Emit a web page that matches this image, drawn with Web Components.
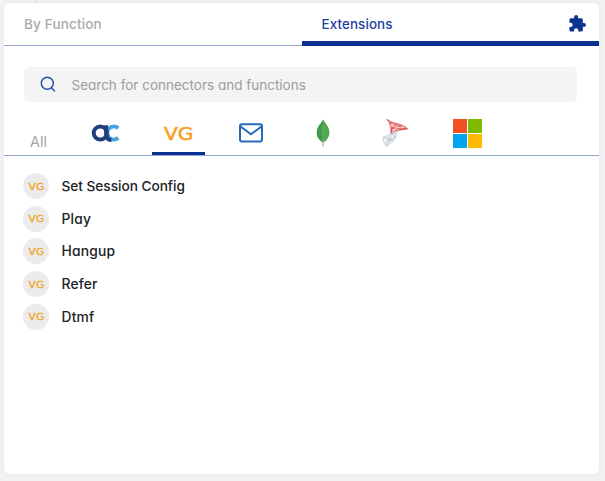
<!DOCTYPE html>
<html lang="en"><head><meta charset="utf-8"><title>Extensions</title>
<style>
html,body{margin:0;height:100%}
body{background:linear-gradient(#dedede,#dedede) 35px 0/1px 3px no-repeat #f2f2f2;overflow:hidden;font-family:Inter,"Open Sans",sans-serif;font-feature-settings:"cv11";font-size:14px;color:#202226}
</style></head><body>
<connector-panel></connector-panel>
<script>
const define=(name,html)=>{
  const t=document.createElement('template');t.innerHTML=html;
  customElements.define(name,class extends HTMLElement{
    constructor(){super();this.attachShadow({mode:'open'}).append(t.content.cloneNode(true));}
  });
};

define('vg-logo',`<style>:host{display:block;width:30px;height:20px}svg{display:block;width:100%;height:100%;overflow:visible}
text{font-family:"DejaVu Sans",sans-serif;font-weight:400;font-size:17px;fill:#f5a11c;stroke:#f5a11c;stroke-width:.5}</style>
<svg viewBox="0 0 30 20"><text x="1" y="16.5" textLength="29.5" lengthAdjust="spacingAndGlyphs">VG</text></svg>`);

define('head-tab',`<style>:host{display:flex;align-items:center;flex:1;box-sizing:border-box;height:43px;padding:0 13px 0 20.5px;color:#a9a9ae;border-bottom:1px solid #92a5ce;font-weight:500;font-size:13.5px;letter-spacing:.17px}
:host([active]){flex:0 0 297.5px;color:#1e419c;border-bottom:5px solid #0a3192;padding:4px 13px 0 20px;font-size:13.4px;letter-spacing:.1px}
span{flex:1}</style><span><slot></slot></span><slot name="icon"></slot>`);

define('search-field',`<style>:host{display:flex;align-items:center;height:35px;margin:21.5px 22px 0 20.5px;border-radius:5px;background:#f4f4f4;color:#9d9da0;font-size:13.5px}
svg{width:17px;height:17px;margin:0 14.5px 0 16px}</style>
<svg viewBox="0 0 17 17" fill="none" stroke="#1f4aa5" stroke-width="1.4"><circle cx="7.3" cy="7.2" r="6"/><path d="M11.3 11.7l3.3 3.4" stroke-linecap="round"/></svg><span><slot></slot></span>`);

define('filter-tab',`<style>:host{display:flex;justify-content:center;align-items:center;width:53px;height:44px;box-sizing:border-box;padding-top:4px;border-bottom:3px solid transparent;flex:none}
:host([active]){border-color:#0a3192}</style><slot></slot>`);

define('filter-bar',`<style>:host{display:flex;align-items:flex-end;height:53.5px;border-bottom:1px solid #92a5ce;box-sizing:border-box;padding-left:26.5px}
.all{width:49.3px;color:#a5a5aa;font-size:14.4px;line-height:17px;padding-bottom:4.5px}
.tabs{display:flex;gap:19.4px}svg{display:block}</style>
<div class="all"><span>All</span></div><div class="tabs">
<filter-tab><svg width="30" height="20" viewBox="0 0 30 20" fill="none"><path d="M27.2 5.2A6.5 6.5 0 1 0 27.2 14.8" stroke="#4aa3df" stroke-width="4"/><circle cx="9.3" cy="10" r="6.6" stroke="#213f7d" stroke-width="4"/><path d="M15.1 2.2V10Q15.1 17 20.4 17.2" stroke="#213f7d" stroke-width="4"/></svg></filter-tab>
<filter-tab active><vg-logo></vg-logo></filter-tab>
<filter-tab><svg width="26" height="22" viewBox="0 0 26 22" fill="none" stroke="#276bb5" stroke-width="2"><rect x="2" y="2.2" width="22" height="17.2" rx="1.8"/><path d="M2.5 4.5L13 12.3 23.5 4.5"/></svg></filter-tab>
<filter-tab><svg width="16" height="28" viewBox="0 0 16 28"><path d="M8 .5C6.4 4.4 1.7 7 1.7 14c0 5 3.3 7.2 5.4 9.2h1.8c2.4-2.2 5.4-5 5.4-9.7C14.3 7 9.2 4 8 .5Z" fill="#429947"/><path d="M8 .5C9.2 4 14.3 7 14.3 13.5c0 4.7-3 7.5-5.4 9.7H8Z" fill="#4faa4d"/><path d="M8 7v16" stroke="#80bd7a" stroke-width=".7"/><path d="M8 22.5V27.5" stroke="#b9b39c" stroke-width="1.4"/></svg></filter-tab>
<filter-tab><svg width="28" height="30" viewBox="0 0 28 30" fill="none"><path d="M6.2 1.5C7.5 3.5 10 4.6 14 5.3 20 6.3 23.5 8 26.4 10.7 20.5 11.3 14.3 12.4 10.2 15.5 11.5 10 9.7 5.7 6.2 1.5Z" fill="#f6c0bf" stroke="#dc4649" stroke-width=".9"/><path d="M6.2 1.5 15 6.7 11 10.2 20 8 14.7 12.7 26.4 10.7 11 10.2 10.2 15.5 8.5 5.5 20 8" stroke="#dc4649" stroke-width=".65"/><path d="M9 7.8 13 6M14 10.2 19 9.2" stroke="#fff" stroke-width=".7"/><path d="M10.2 15.5 18 12.3C14 16 16.5 22 5.3 28.3 2.8 25.5 1.3 21.5 2.3 19.2Z" fill="#eef0f3" stroke="#bec4cc" stroke-width=".7"/><path d="M2.3 19.2 9 22 10.2 15.5 14.6 19.5 9 22 5.3 28.3M4 25 9 22 12.2 23.5M5.5 18 9 22M10.2 15.5 15 16" stroke="#a9b1bb" stroke-width=".65"/></svg></filter-tab>
<filter-tab><svg width="29" height="29" viewBox="0 0 29 29"><path d="M0 0h14v14H0Z" fill="#f25022"/><path d="M15 0h14v14H15Z" fill="#7fba00"/><path d="M0 15h14v14H0Z" fill="#00a4ef"/><path d="M15 15h14v14H15Z" fill="#ffb900"/></svg></filter-tab>
</div>`);

define('function-item',`<style>:host{display:flex;align-items:center;gap:12.5px;height:26px;font-weight:500;font-size:13.8px;letter-spacing:.2px}
:host([wide]){font-size:13.7px;letter-spacing:-.04px}
.badge{width:26px;height:26px;border-radius:50%;background:#ebebeb;display:grid;place-items:center;flex:none}
vg-logo{width:16px;height:10.6px}</style><div class="badge"><vg-logo></vg-logo></div><span><slot></slot></span>`);

define('connector-panel',`<style>:host{display:block;box-sizing:border-box;height:481px;padding:2.5px 6px 7px 3.5px}
.panel{height:471.5px;background:#fff;border-radius:6px;box-shadow:0 0 7px #0000000d;overflow:hidden}
header{display:flex}.list{display:flex;flex-direction:column;gap:6.7px;padding:17.5px 0 0 19.5px}</style>
<div class="panel"><header><head-tab>By Function</head-tab><head-tab active>Extensions
<svg slot="icon" width="17" height="17" viewBox="1.5 1 21.5 21.5" fill="#0b3491"><path d="M20.5 11H19V7a2 2 0 0 0-2-2h-4V3.5a2.5 2.5 0 0 0-5 0V5H4a2 2 0 0 0-2 2v3.8h1.5a2.7 2.7 0 0 1 0 5.4H2V20a2 2 0 0 0 2 2h3.8v-1.5a2.7 2.7 0 0 1 5.4 0V22H17a2 2 0 0 0 2-2v-4h1.5a2.5 2.5 0 0 0 0-5Z"/></svg></head-tab></header>
<search-field>Search for connectors and functions</search-field>
<filter-bar></filter-bar>
<div class="list"><function-item wide>Set Session Config</function-item><function-item>Play</function-item><function-item>Hangup</function-item><function-item>Refer</function-item><function-item>Dtmf</function-item></div></div>`);
</script></body></html>
